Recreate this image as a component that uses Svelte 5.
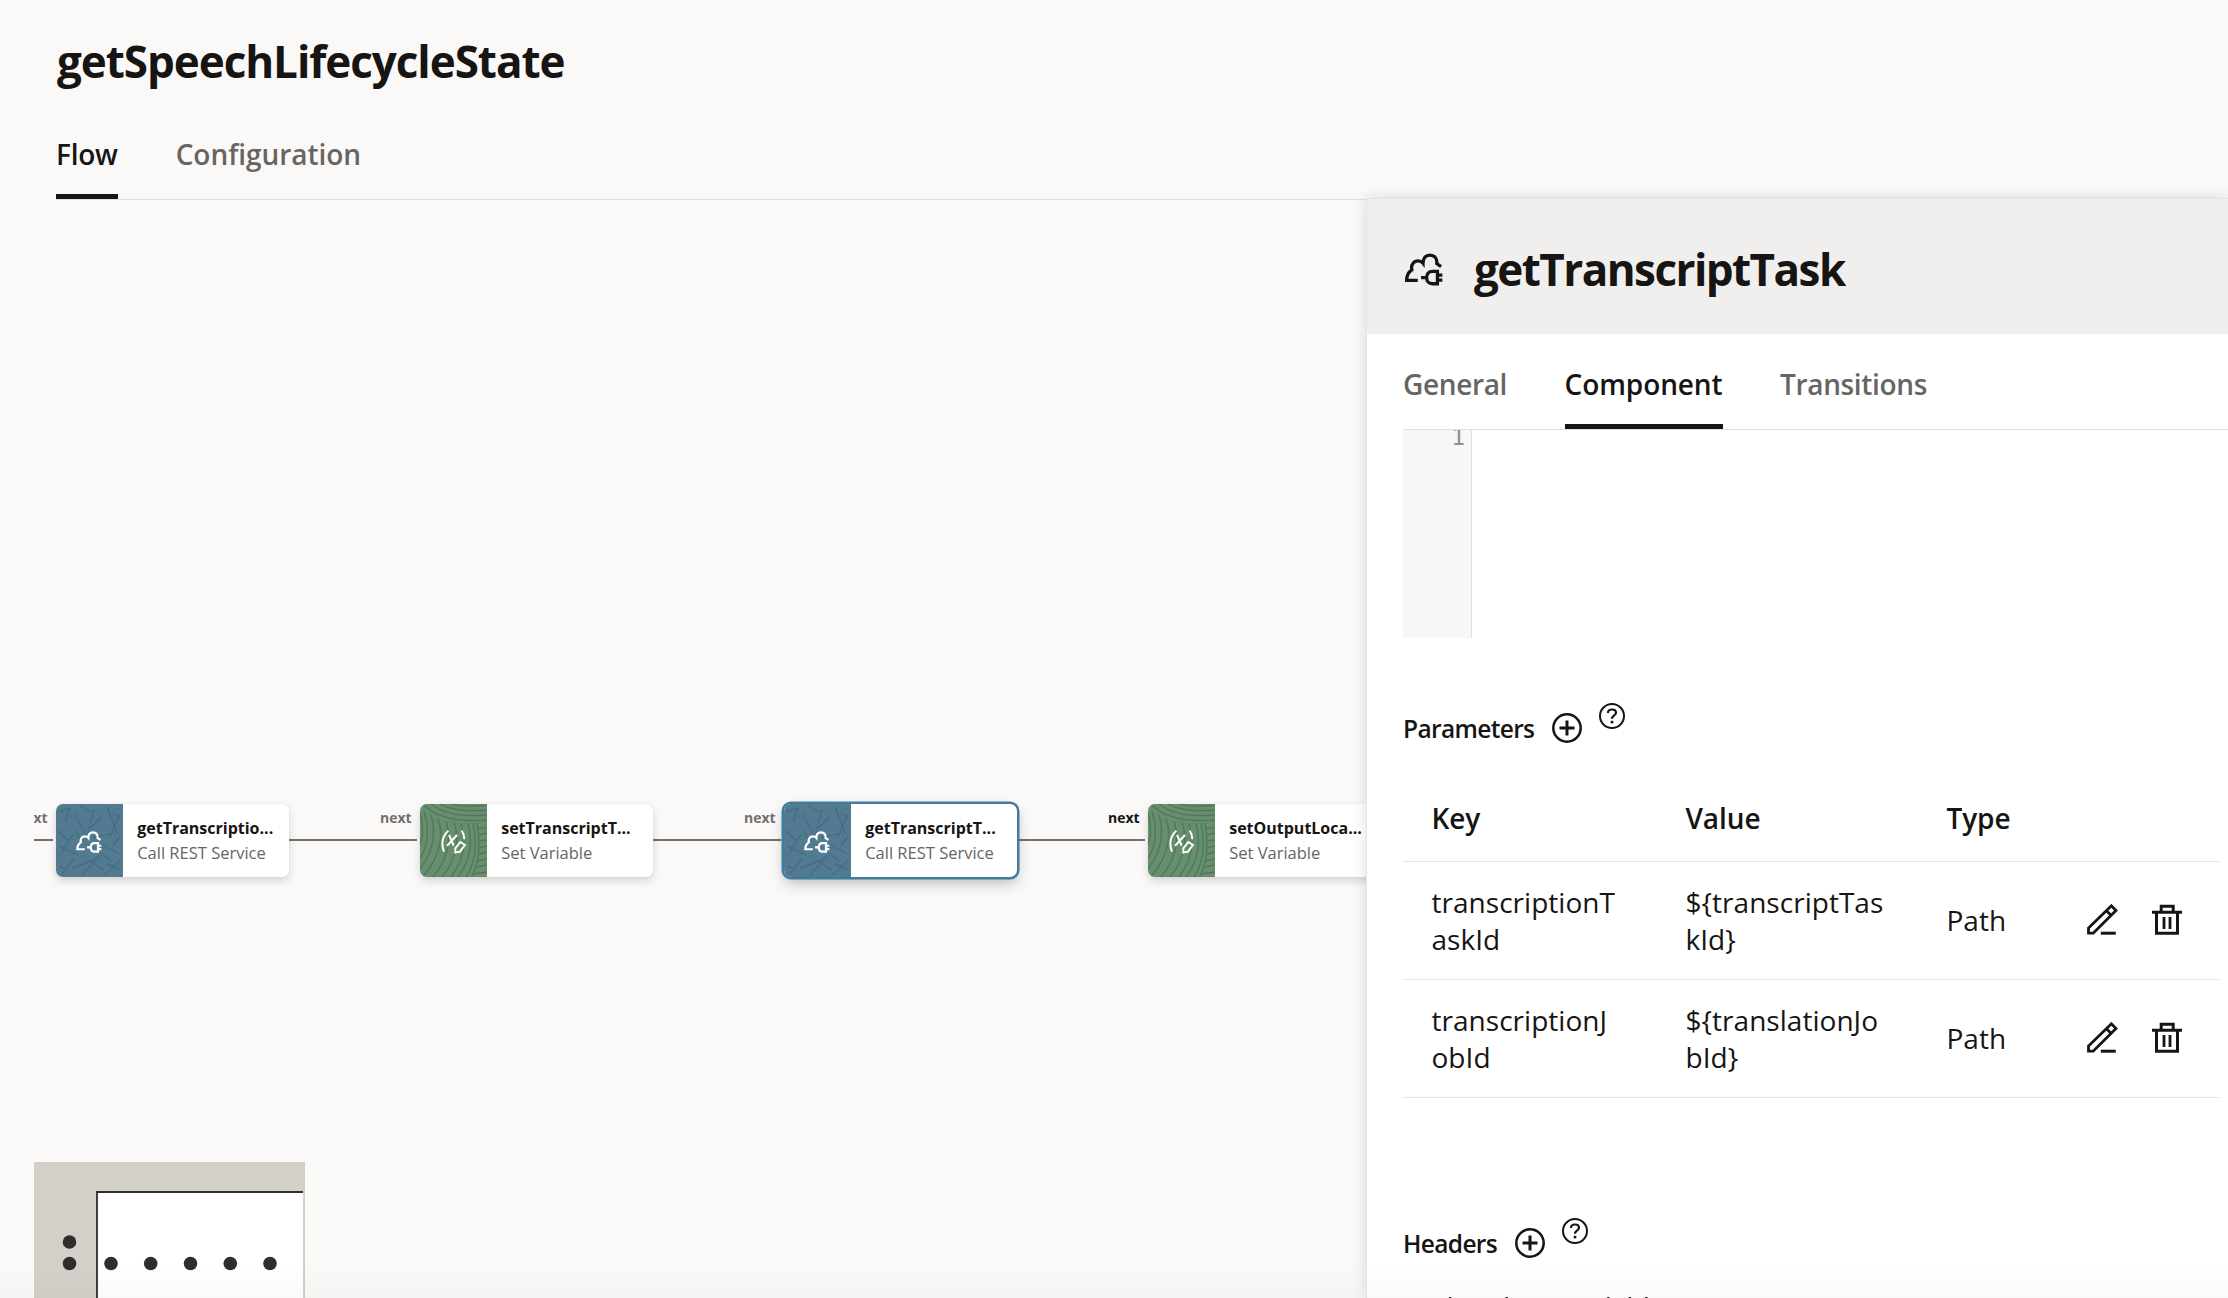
<script>
  const nodes = [
    { x: 56, kind: 'rest', title: 'getTranscriptio...', sub: 'Call REST Service', selected: false },
    { x: 420, kind: 'var', title: 'setTranscriptT...', sub: 'Set Variable', selected: false },
    { x: 784, kind: 'rest', title: 'getTranscriptT...', sub: 'Call REST Service', selected: true },
    { x: 1148, kind: 'var', title: 'setOutputLoca...', sub: 'Set Variable', selected: false }
  ];
  const edges = [
    { x: 34, w: 19 },
    { x: 289, w: 128 },
    { x: 653, w: 128 },
    { x: 1019, w: 126 }
  ];
  const labels = [
    { x: 16, active: false },
    { x: 380, active: false },
    { x: 744, active: false },
    { x: 1108, active: true }
  ];
  const rows = [
    { key: ['transcriptionT', 'askId'], value: ['${transcriptTas', 'kId}'], type: 'Path' },
    { key: ['transcriptionJ', 'obId'], value: ['${translationJo', 'bId}'], type: 'Path' }
  ];
  const dots = [[35.5, 80], [35.5, 101.5], [77, 101.5], [116.7, 101.5], [156.5, 101.5], [196.3, 101.5], [236, 101.5]];
</script>

{#snippet cloud(cls)}
  <svg class={cls} viewBox="44 40 116 100" fill="none" stroke="currentColor">
    <path d="M83 123H49C49 109 54 98 65 91C61 75 71 64 84 64C90 64 95 66 99 71C99 56 107 46 120 46C135 46 143 58 141 72L154 81" />
    <path d="M143 95.500H128C116 95.500 110 104 110 114.500S116 133.500 128 133.500H143Z" />
    <path d="M93 114.500H110M143 107H158M143 122.500H158" />
  </svg>
{/snippet}

{#snippet plus()}
  <svg class="plus" viewBox="0 0 30 30" fill="none" stroke="currentColor" stroke-width="2.500">
    <circle cx="15" cy="15" r="13.700" />
    <path d="M15 7.500V22.500M7.500 15H22.500" stroke-width="3" />
  </svg>
{/snippet}

{#snippet help()}
  <svg class="help" viewBox="0 0 26 26" fill="none" stroke="currentColor" stroke-width="2">
    <circle cx="13" cy="13" r="12" />
    <path d="M9 10C9 7.500 10.600 6.500 13 6.500S17 7.800 17 9.800C17 12.500 13 12.200 13 15.800" stroke-width="2.200" />
    <path d="M13 17.800V20.400" stroke-width="2.600" />
  </svg>
{/snippet}

<div class="app">
  <header class="top">
    <h1>getSpeechLifecycleState</h1>
    <nav class="tabs">
      <span class="tab active">Flow</span>
      <span class="tab">Configuration</span>
    </nav>
  </header>

  <div class="canvas">
    {#each edges as e}
      <i class="edge" style="left:{e.x - 34}px;width:{e.w}px"></i>
    {/each}
    {#each labels as l}
      <span class="label" class:on={l.active} style="left:{l.x - 34}px">next</span>
    {/each}
    {#each nodes as n}
      <div class="node {n.kind}" class:selected={n.selected} style="left:{n.x - 34}px">
        <div class="tile">
          {#if n.kind === 'rest'}
            <svg class="pattern" viewBox="0 0 67 73" fill="none" stroke="#476c84" stroke-width="1.400">
              <path d="M3 8L14 4M14 4L9 18M18 9L31 33L34 22M38 6L34 20M46 13L32 26M51 3L61 30M65 8L53 34M2 26L13 38M5 50L17 31M3 42L22 51M25 36L19 26M37 34L57 29M45 40L62 49M65 31L57 42M3 62L12 66M17 64L44 53M25 72L44 51M32 56L48 66M49 71L64 56M50 60L66 66M6 70L18 55M42 47L54 56M57 9L66 15M24 2L35 8" />
            </svg>
            {@render cloud('glyph')}
          {:else}
            <svg class="pattern" viewBox="0 0 67 73" fill="none" stroke="#50785a" stroke-width="1.400">
              <path d="M3 0C17 15 42 18 67 16M11 0C25 11 45 13 67 11M20 0C33 7 48 8 67 6M31 0C43 3 53 3 67 1" />
              <path d="M0 9C4 22 3 33 0 42M4 7C10 25 8 42 0 54M11 11C17 31 12 49 0 65M18 14C25 34 18 55 3 73M26 17C33 39 25 59 13 73M34 18C41 40 33 60 22 73M41 19C48 42 42 59 31 73M48 19C54 42 48 60 38 73M53 19C58 42 54 62 46 73M57 19C61 42 58 60 52 73" />
              <path d="M57 24H67M59 31L67 29M59 37L67 36M59 44L67 42M59 50L67 48M57 57L67 55M56 63L67 61M53 70L67 68" />
            </svg>
            <svg class="vglyph" viewBox="92 100 84 76" fill="none" stroke="currentColor" stroke-width="5.800">
              <path d="M117 105C98 123 95 145 104 168M119 118L133 150M143 118L113 151M157 105C163 113 165 121 165 131" />
              <path d="M138 158L153 139L167 148L152 168L138 171Z" />
            </svg>
          {/if}
        </div>
        <div class="text">
          <b>{n.title}</b>
          <span>{n.sub}</span>
        </div>
      </div>
    {/each}

    <div class="minimap">
      <svg viewBox="0 0 271 136">
        <rect x="63" y="30" width="206" height="106" fill="#fff" />
        <path d="M63 136V30H269" fill="none" stroke="#312d2a" stroke-width="1.800" />
        {#each dots as [cx, cy]}
          <circle {cx} {cy} r="6.800" fill="#312d2a" />
        {/each}
      </svg>
    </div>
  </div>

  <aside class="panel">
    <div class="phead">
      {@render cloud('cloud')}
      <h2>getTranscriptTask</h2>
    </div>
    <div class="pbody">
      <nav class="tabs ptabs">
        <span class="tab">General</span>
        <span class="tab active">Component</span>
        <span class="tab">Transitions</span>
      </nav>
      <div class="editor"><div class="gutter"><span>1</span></div></div>

      <div class="section params">
        <h3>Parameters</h3>
        {@render plus()}
        {@render help()}
      </div>

      <div class="table">
        <div class="row head"><span>Key</span><span>Value</span><span>Type</span></div>
        {#each rows as r}
          <div class="row">
            <span>{r.key[0]}<br />{r.key[1]}</span>
            <span>{r.value[0]}<br />{r.value[1]}</span>
            <span>{r.type}</span>
            <div class="actions">
              <svg width="31" height="31" viewBox="0 0 31 31" fill="none" stroke="currentColor" stroke-width="2.800">
                <path d="M1.500 29.200V24L24.400 1.800L29 6.400L6.200 29.200ZM19.500 6.800L24.200 11.400" />
                <path d="M13.800 29.200H28.800" stroke-width="3" />
              </svg>
              <svg width="30" height="31" viewBox="0 0 30 31" fill="none" stroke="currentColor" stroke-width="3">
                <path d="M0 8.300H30M4.500 8.300V29.200H25.500V8.300M9.200 8V2.300H21.200V8" />
                <path d="M12 13V25M18 13V25" stroke-width="2.800" />
              </svg>
            </div>
          </div>
        {/each}
      </div>

      <div class="section headers">
        <h3>Headers</h3>
        {@render plus()}
        {@render help()}
      </div>
      <p class="empty">No headers available</p>
    </div>
  </aside>
  <div class="fade"></div>
</div>

<style>
  :global(body) { margin: 0; }
  .app {
    position: relative;
    width: 2228px;
    height: 1298px;
    overflow: hidden;
    background: #fbf9f8;
    color: #161513;
    font-family: "Open Sans", "Noto Sans", sans-serif;
    display: flex;
    flex-direction: column;
  }
  h1, h2, h3, p { margin: 0; }
  svg { display: block; flex: none; }
  .top { padding: 31px 0 0 56px; }
  h1, h2 { font-size: 44px; line-height: 60px; font-weight: 700; white-space: nowrap; }
  h1 { letter-spacing: -1.05px; padding-left: 1px; }
  h2 { letter-spacing: -1.55px; }
  .tabs { display: flex; gap: 58px; border-bottom: 1px solid #e0dfdd; }
  .top .tabs { margin-top: 43px; }
  .tab {
    font-size: 28px;
    line-height: 40px;
    font-weight: 600;
    letter-spacing: -0.05px;
    padding-bottom: 20px;
    border-bottom: 5px solid transparent;
    color: #676563;
  }
  .tab.active { color: #161513; border-bottom-color: #161513; letter-spacing: -0.25px; }

  .canvas { position: relative; flex: 1; margin-left: 34px; overflow: hidden; }
  .edge { position: absolute; top: 639px; height: 2px; background: #75706c; }
  .label {
    position: absolute;
    top: 608px;
    font-size: 14px;
    line-height: 20px;
    font-weight: 700;
    color: #75706c;
  }
  .label.on { color: #161513; }
  .node {
    position: absolute;
    top: 604px;
    width: 233px;
    height: 73px;
    display: flex;
    border-radius: 7px;
    background: #fff;
    box-shadow: 0 4px 8px rgba(0, 0, 0, 0.15), 0 0 2px rgba(0, 0, 0, 0.06);
  }
  .node.selected { box-shadow: 0 0 0 2.500px #3f7c9d, 0 6px 14px rgba(0, 0, 0, 0.26); }
  .tile {
    position: relative;
    width: 67px;
    display: flex;
    color: #fff;
    border-radius: 7px 0 0 7px;
    overflow: hidden;
  }
  .rest .tile { background: #527b92; }
  .var .tile { background: #688f6d; }
  .pattern { position: absolute; inset: 0; width: 67px; height: 73px; }
  .glyph { position: relative; width: 26px; height: 22px; margin: 27px 0 0 20px; stroke-width: 10; }
  .vglyph { position: relative; width: 28px; height: 25.300px; margin: 24.500px 0 0 20px; }
  .text { display: flex; flex-direction: column; padding: 12px 0 0 14.200px; white-space: nowrap; }
  .text b { font-size: 16px; line-height: 24px; }
  .text span { font-size: 16.500px; line-height: 26px; color: #676563; }

  .minimap {
    position: absolute;
    left: 0;
    bottom: 0;
    width: 271px;
    height: 136px;
    background: #d3d0ca;
  }
  .minimap svg { width: 271px; height: 136px; }

  .panel {
    position: absolute;
    left: 1366px;
    top: 198px;
    width: 862px;
    height: 1100px;
    background: #fff;
    border-top: 1px solid #e5e4e2;
    border-left: 1px solid #e5e4e2;
    box-sizing: border-box;
    box-shadow: 0 0 14px rgba(0, 0, 0, 0.13);
    overflow: hidden;
  }
  .phead {
    height: 135px;
    box-sizing: border-box;
    padding: 4px 0 0 38px;
    display: flex;
    align-items: center;
    background: #f0efed;
  }
  .cloud { width: 38px; height: 33px; stroke-width: 10; margin-top: 2px; }
  .phead h2 { margin-left: 31px; }
  .pbody { padding: 30px 0 0 36px; }
  .ptabs { gap: 57.500px; }
  .ptabs .tab { letter-spacing: -0.35px; }
  .ptabs .tab.active { letter-spacing: -0.1px; }
  .editor { height: 208px; overflow: hidden; }
  .gutter {
    width: 68px;
    height: 208px;
    background: #f7f7f7;
    border-right: 1px solid #ddd;
    text-align: right;
  }
  .gutter span {
    display: block;
    padding-right: 6px;
    font: 23px/14px "DejaVu Sans Mono", monospace;
    color: #8f8f8f;
  }
  .section { display: flex; align-items: center; height: 34px; }
  .params { margin-top: 73px; }
  .headers { margin-top: 128px; }
  h3 { font-size: 24.500px; line-height: 34px; font-weight: 650; letter-spacing: -0.65px; padding-top: 2px; }
  .plus { width: 30px; height: 30px; margin-left: 18px; }
  .help { width: 26px; height: 26px; margin-left: 17px; align-self: flex-start; margin-top: -8px; }
  .table { margin-top: 30px; width: 816px; }
  .row {
    display: grid;
    grid-template-columns: 254px 261px 140px 1fr;
    align-items: center;
    height: 117px;
    padding-left: 28.500px;
    border-bottom: 1px solid #e4e3e2;
    font-size: 28px;
    line-height: 37px;
    font-weight: 430;
    letter-spacing: 0.03px;
  }
  .row.head { height: 86px; font-weight: 620; letter-spacing: -0.1px; }
  .actions { display: flex; gap: 34px; margin: -2px 0 0 0.500px; }
  .empty { margin-top: 29px; font-size: 28px; line-height: 37px; letter-spacing: -0.6px; white-space: nowrap; }
  .fade {
    position: absolute;
    left: 0;
    right: 0;
    bottom: 0;
    height: 32px;
    background: linear-gradient(rgba(0, 0, 0, 0), rgba(0, 0, 0, 0.018));
  }
</style>
